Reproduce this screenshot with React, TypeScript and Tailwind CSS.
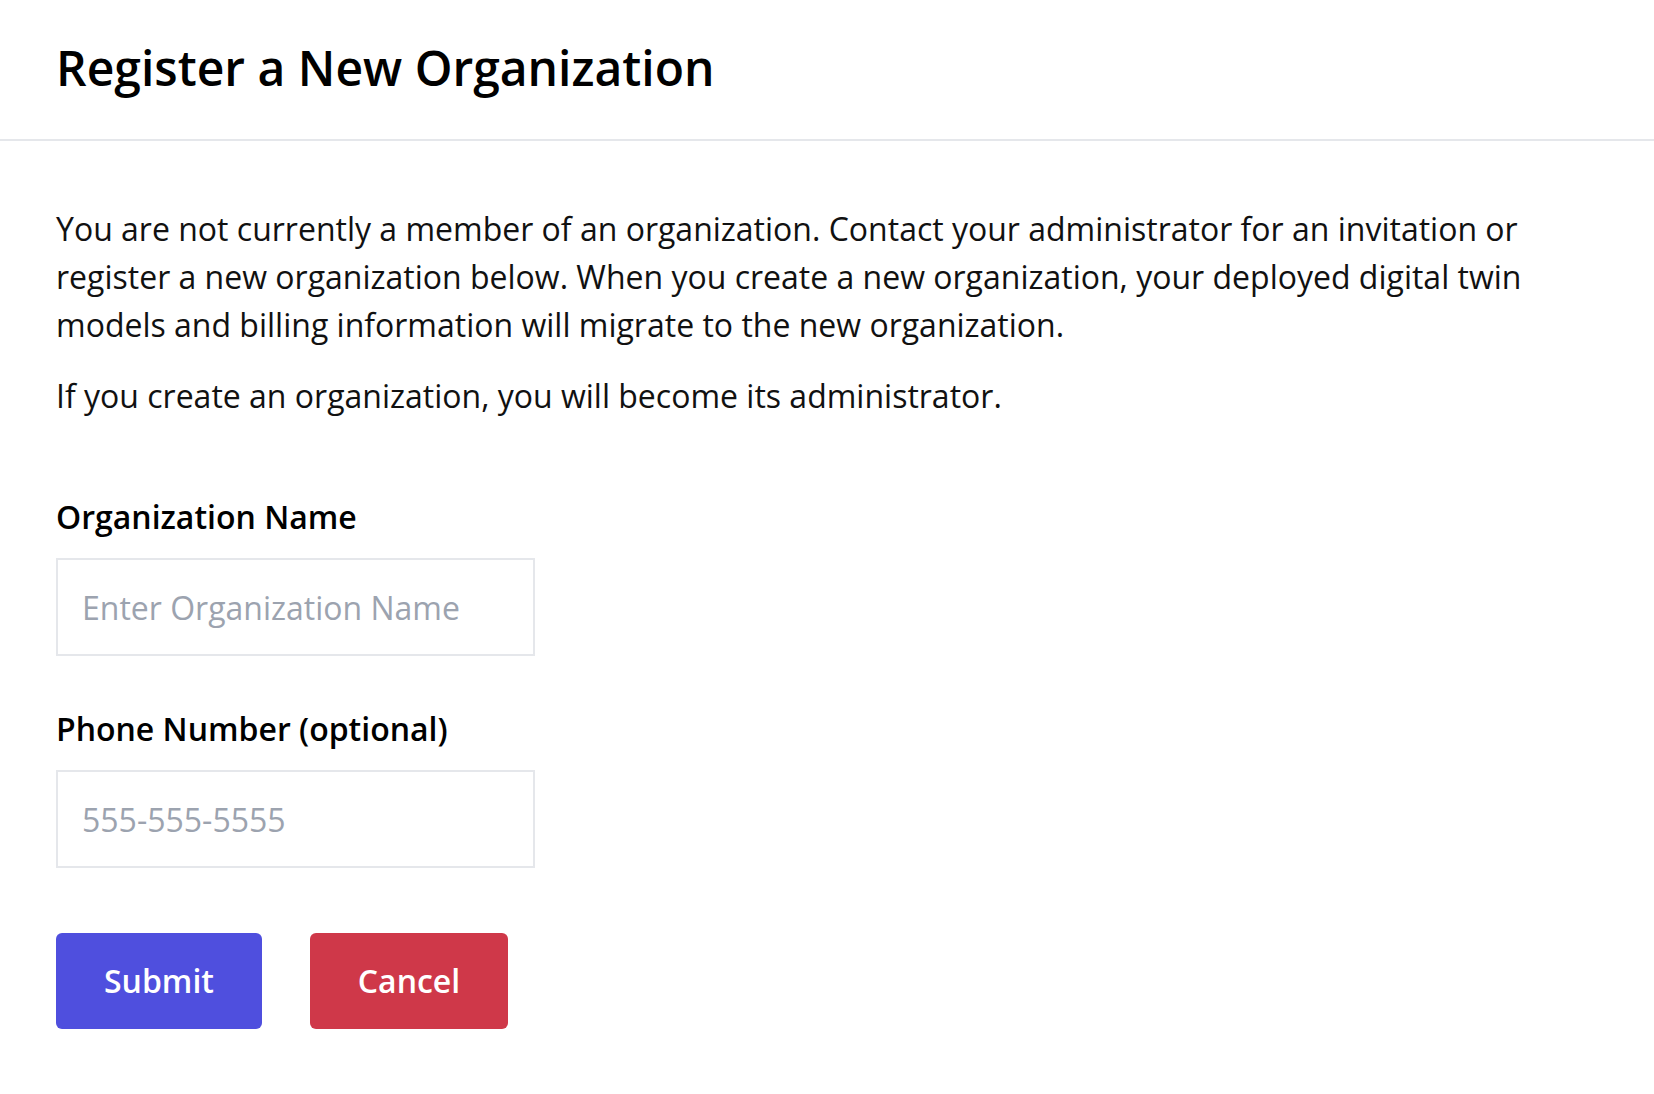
import React from "react";

export default function App() {
  return (
    <div className="min-h-screen bg-white text-black" style={{ fontFamily: '"Open Sans", sans-serif' }}>
      <header className="h-[141px] border-b-2 border-[#e5e7eb] px-[56px] flex items-start">
        <h1 className="mt-[36px] text-[48px] leading-[64px] font-semibold">
          Register a New Organization
        </h1>
      </header>
      <main className="px-[56px] pt-[64px]">
        <div className="max-w-[1500px] text-[32px] leading-[48px] text-[#111]">
          <p>
            You are not currently a member of an organization. Contact your administrator for an invitation or register a new organization below. When you create a new organization, your deployed digital twin models and billing information will migrate to the new organization.
          </p>
          <p className="mt-[23px]">If you create an organization, you will become its administrator.</p>
        </div>
        <form className="mt-[77px] flex flex-col">
          <label className="text-[32px] leading-[40px] font-semibold">Organization Name</label>
          <input
            className="mt-[21px] w-[479px] h-[98px] border-2 border-[#e5e7eb] px-[24px] text-[32px] outline-none placeholder:text-[#9ca3af]"
            placeholder="Enter Organization Name"
          />
          <label className="mt-[53px] text-[32px] leading-[40px] font-semibold">Phone Number (optional)</label>
          <input
            className="mt-[21px] w-[479px] h-[98px] border-2 border-[#e5e7eb] px-[24px] text-[32px] outline-none placeholder:text-[#9ca3af]"
            placeholder="555-555-5555"
          />
          <div className="mt-[65px] flex gap-[48px]">
            <button type="button" className="w-[206px] h-[96px] rounded-[6px] bg-[#4f4fde] text-white text-[32px] font-semibold">
              Submit
            </button>
            <button type="button" className="w-[198px] h-[96px] rounded-[6px] bg-[#cf3849] text-white text-[32px] font-semibold">
              Cancel
            </button>
          </div>
        </form>
      </main>
    </div>
  );
}
